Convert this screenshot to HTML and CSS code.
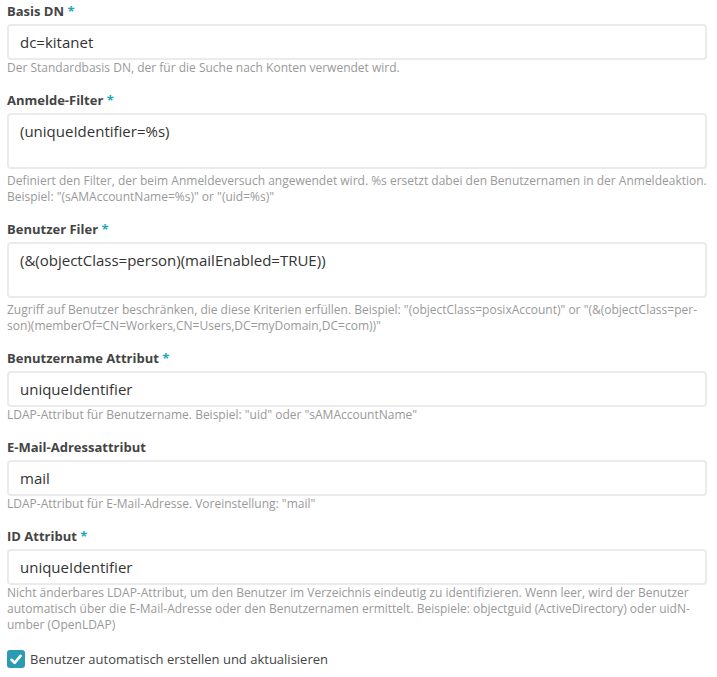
FILE: index.html
```html
<!DOCTYPE html>
<html lang="de">
<head>
<meta charset="utf-8">
<link rel="stylesheet" href="styles.css">
</head>
<body>
<form class="form">
  <div class="group">
    <label class="label">Basis DN <span class="req">*</span></label>
    <input class="input" type="text" value="dc=kitanet">
    <p class="help">Der Standardbasis DN, der für die Suche nach Konten verwendet wird.</p>
  </div>
  <div class="group">
    <label class="label">Anmelde-Filter <span class="req">*</span></label>
    <textarea class="input area">(uniqueIdentifier=%s)</textarea>
    <p class="help">Definiert den Filter, der beim Anmeldeversuch angewendet wird. %s ersetzt dabei den Benutzernamen in der Anmeldeaktion. Beispiel: "(sAMAccountName=%s)" or "(uid=%s)"</p>
  </div>
  <div class="group">
    <label class="label">Benutzer Filer <span class="req">*</span></label>
    <textarea class="input area">(&amp;(objectClass=person)(mailEnabled=TRUE))</textarea>
    <p class="help">Zugriff auf Benutzer beschränken, die diese Kriterien erfüllen. Beispiel: "(objectClass=posixAccount)" or "(&amp;(objectClass=per&shy;son)(memberOf=CN=Workers,CN=Users,DC=myDomain,DC=com))"</p>
  </div>
  <div class="group">
    <label class="label">Benutzername Attribut <span class="req">*</span></label>
    <input class="input" type="text" value="uniqueIdentifier">
    <p class="help">LDAP-Attribut für Benutzername. Beispiel: "uid" oder "sAMAccountName"</p>
  </div>
  <div class="group">
    <label class="label">E-Mail-Adressattribut</label>
    <input class="input" type="text" value="mail">
    <p class="help">LDAP-Attribut für E-Mail-Adresse. Voreinstellung: "mail"</p>
  </div>
  <div class="group">
    <label class="label">ID Attribut <span class="req">*</span></label>
    <input class="input" type="text" value="uniqueIdentifier">
    <p class="help">Nicht änderbares LDAP-Attribut, um den Benutzer im Verzeichnis eindeutig zu identifizieren. Wenn leer, wird der Benutzer automatisch über die E-Mail-Adresse oder den Benutzernamen ermittelt. Beispiele: objectguid (ActiveDirectory) oder uidN&shy;umber (OpenLDAP)</p>
  </div>
  <label class="check">
    <span class="box"><svg width="12" height="11" viewBox="0 0 12 11"><path d="M1.5 5.8 L4.6 8.8 L10.5 1.8" fill="none" stroke="#fff" stroke-width="2.6" stroke-linecap="round" stroke-linejoin="round"/></svg></span>
    <span class="check-text">Benutzer automatisch erstellen und aktualisieren</span>
  </label>
</form>
</body>
</html>
```
FILE: styles.css
```css
html, body {
  margin: 0;
  padding: 0;
  background: #fff;
}
body {
  font-family: "Open Sans", "Liberation Sans", sans-serif;
  color: #333;
}
.form {
  padding: 2px 10px 0 7px;
  display: flex;
  flex-direction: column;
}
.group {
  display: flex;
  flex-direction: column;
  margin-bottom: 15px;
}
.label {
  font-size: 13px;
  font-weight: 700;
  line-height: 18px;
  color: #444;
  margin-bottom: 4px;
}
.req {
  color: #1fa7b5;
}
.input {
  display: block;
  box-sizing: border-box;
  width: 100%;
  height: 36px;
  margin: 0;
  border: 2px solid #ebebeb;
  border-radius: 4px;
  padding: 0 11px;
  font-family: "Open Sans", "Liberation Sans", sans-serif;
  font-size: 15px;
  color: #333;
  background: #fff;
  outline: none;
}
.area {
  height: 56px;
  padding: 6px 11px;
  resize: none;
  line-height: 20px;
  margin-bottom: 4px;
}
.help {
  margin: 0;
  font-size: 12px;
  line-height: 16px;
  color: #999;
  hyphens: manual;
}
.check {
  display: flex;
  align-items: center;
  gap: 5px;
  margin-top: 2px;
  font-size: 13px;
  color: #444;
}
.box {
  width: 18px;
  height: 18px;
  border-radius: 3px;
  background: #2a9bb2;
  display: flex;
  align-items: center;
  justify-content: center;
}
```
